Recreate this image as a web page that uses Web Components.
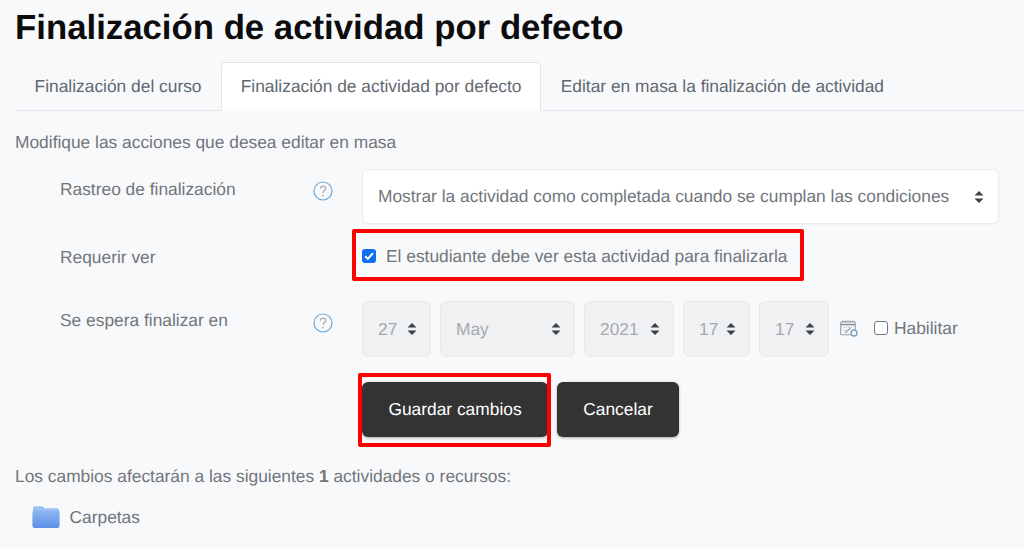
<!DOCTYPE html>
<html lang="es">
<head>
<meta charset="utf-8">
<title>Finalización de actividad por defecto</title>
<style>
    html, body { margin: 0; background: #f8f9fb; }
    body { font-family: "Liberation Sans", Arial, sans-serif; font-size: 17.36px; color: #70767c; height: 548px; overflow: hidden; text-rendering: geometricPrecision; }
</style>
</head>
<body>
<completion-page>
    <page-tabs slot="tabs">
        <page-tab>Finalización del curso</page-tab>
        <page-tab active>Finalización de actividad por defecto</page-tab>
        <page-tab>Editar en masa la finalización de actividad</page-tab>
    </page-tabs>

    <form-row slot="form" label="Rastreo de finalización" help style="--row-height:55px; --label-top:9px">
        <fake-select wide>Mostrar la actividad como completada cuando se cumplan las condiciones</fake-select>
    </form-row>
    <form-row slot="form" label="Requerir ver" style="--row-top:9px; --row-height:46px; --label-top:13px">
        <red-frame style="--out-t:-4px; --out-r:-17px; --out-b:-2px; --out-l:-10px">
            <check-box checked>El estudiante debe ver esta actividad para finalizarla</check-box>
        </red-frame>
    </form-row>
    <form-row slot="form" label="Se espera finalizar en" help style="--row-top:22px; --row-height:56px; --label-top:8px">
        <fake-select disabled style="width:69px">27</fake-select>
        <fake-select disabled style="width:135px">May</fake-select>
        <fake-select disabled style="width:90px">2021</fake-select>
        <fake-select disabled style="width:67px">17</fake-select>
        <fake-select disabled style="width:70px">17</fake-select>
        <calendar-icon></calendar-icon>
        <check-box small>Habilitar</check-box>
    </form-row>
    <form-row slot="form" style="--row-top:25px; --row-height:55px">
        <red-frame style="--out-t:-9px; --out-r:-3px; --out-b:-10px; --out-l:-4px">
            <dark-button style="width:186px">Guardar cambios</dark-button>
        </red-frame>
        <dark-button style="width:122px">Cancelar</dark-button>
    </form-row>

    <span slot="affected">Los cambios afectarán a las siguientes <b>1</b> actividades o recursos:</span>
    <folder-item slot="folder">Carpetas</folder-item>
</completion-page>

<script>
class CompletionPage extends HTMLElement {
    constructor() {
        super();
        this.attachShadow({mode: 'open'}).innerHTML = `
            <style>
                :host { display: block; padding: 0 15px; }
                h1 { margin: 0; padding-top: 9px; height: 62px; box-sizing: border-box; font-size: 34.78px; line-height: 38px; font-weight: 700; color: #0c0c0c; }
                .intro { margin-top: 20px; line-height: 22px; }
                .form { margin-top: 16px; }
                .affected { margin-top: 28px; line-height: 22px; }
                .folder { margin-top: 18px; padding-left: 17px; }
            </style>
            <h1>Finalización de actividad por defecto</h1>
            <slot name="tabs"></slot>
            <div class="intro">Modifique las acciones que desea editar en masa</div>
            <div class="form"><slot name="form"></slot></div>
            <div class="affected"><slot name="affected"></slot></div>
            <div class="folder"><slot name="folder"></slot></div>
        `;
    }
}

class PageTabs extends HTMLElement {
    constructor() {
        super();
        this.attachShadow({mode: 'open'}).innerHTML = `
            <style>
                :host { display: flex; height: 49px; box-sizing: border-box; margin-right: -15px; border-bottom: 1px solid #e2e5e9; }
            </style>
            <slot></slot>
        `;
    }
}

class PageTab extends HTMLElement {
    constructor() {
        super();
        this.attachShadow({mode: 'open'}).innerHTML = `
            <style>
                :host { display: block; height: 48px; margin-bottom: -1px; box-sizing: content-box; padding: 0 18.6px; line-height: 47px; color: #5f6870; border: 1px solid transparent; border-bottom: 0; border-radius: 4px 4px 0 0; white-space: nowrap; }
                :host([active]) { background: #fff; border-color: #e2e5e9; }
            </style>
            <slot></slot>
        `;
    }
}

class FormRow extends HTMLElement {
    constructor() {
        super();
        const label = this.getAttribute('label') || '';
        const help = this.hasAttribute('help') ? `
            <svg class="help" width="20" height="20" viewBox="0 0 20 20" fill="none" aria-hidden="true">
                <circle cx="10" cy="10" r="9" stroke="#6fa8d8" stroke-width="1.2"/>
                <path d="M7.4 7.7c0-1.5 1.1-2.5 2.7-2.5s2.6.9 2.6 2.2c0 1.1-.6 1.6-1.4 2.2-.8.6-1.2 1-1.2 2v.4" stroke="#a2a8ad" stroke-width="1.2"/>
                <circle cx="10.1" cy="14.6" r=".9" fill="#a2a8ad"/>
            </svg>` : '';
        this.attachShadow({mode: 'open'}).innerHTML = `
            <style>
                :host { display: grid; grid-template-columns: 253px 20px 1fr; column-gap: 0; margin-top: var(--row-top, 0); padding-left: 45px; }
                .label { padding-top: var(--label-top, 0); line-height: 22px; }
                .help-cell { padding-top: 12px; }
                .help { display: block; }
                .controls { display: flex; align-items: center; gap: 9px; height: var(--row-height, 55px); margin-left: 29px; margin-right: 10px; }
            </style>
            <div class="label">${label}</div>
            <div class="help-cell">${help}</div>
            <div class="controls"><slot></slot></div>
        `;
    }
}

class FakeSelect extends HTMLElement {
    constructor() {
        super();
        this.attachShadow({mode: 'open'}).innerHTML = `
            <style>
                :host { display: flex; align-items: center; justify-content: space-between; box-sizing: border-box; height: 100%; padding: 0 14px 0 15px; background: #fff; border: 1px solid #e9ecef; border-radius: 6px; white-space: nowrap; box-shadow: 0 1px 2px rgba(0,0,0,.04); }
                :host([wide]) { flex: 1; height: 55px; }
                :host([disabled]) { background: #f0f1f3; color: #a5a9ad; border-color: #e7e9ec; box-shadow: none; padding-right: 13px; }
                svg { display: block; flex: none; }
            </style>
            <slot></slot>
            <svg width="10" height="14" viewBox="0 0 10 14" aria-hidden="true"><path d="M5 1 9.5 5.6H.5zM5 13 .5 8.4h9z" fill="#3c4247"/></svg>
        `;
    }
}

class CheckBox extends HTMLElement {
    constructor() {
        super();
        const checked = this.hasAttribute('checked');
        this.attachShadow({mode: 'open'}).innerHTML = `
            <style>
                :host { display: inline-flex; align-items: center; gap: 10px; white-space: nowrap; }
                :host([small]) { gap: 6px; margin-left: 7px; margin-bottom: 2px; }
                .box { box-sizing: border-box; width: 14px; height: 14px; border-radius: 3px; border: 1.5px solid #767676; background: #fff; flex: none; }
                .box.on { background: #0f6ff0; border: 0; }
                .box svg { display: block; }
            </style>
            <span class="box ${checked ? 'on' : ''}">${checked ? '<svg width="14" height="14" viewBox="0 0 14 14" fill="none"><path d="M3.2 7.2 5.9 9.9 10.9 4.2" stroke="#fff" stroke-width="2"/></svg>' : ''}</span>
            <span><slot></slot></span>
        `;
    }
}

// draws the red annotation around whatever it wraps
class RedFrame extends HTMLElement {
    constructor() {
        super();
        this.attachShadow({mode: 'open'}).innerHTML = `
            <style>
                :host { display: flex; align-items: center; position: relative; height: 100%; }
                .frame { position: absolute; top: var(--out-t); right: var(--out-r); bottom: var(--out-b); left: var(--out-l); border: 4px solid #fe0000; border-radius: 2px; pointer-events: none; }
            </style>
            <slot></slot>
            <div class="frame"></div>
        `;
    }
}

class DarkButton extends HTMLElement {
    constructor() {
        super();
        this.attachShadow({mode: 'open'}).innerHTML = `
            <style>
                :host { display: flex; align-items: center; justify-content: center; box-sizing: border-box; height: 55px; background: #333; color: #fff; border-radius: 6px; box-shadow: 0 1px 3px rgba(0,0,0,.3); white-space: nowrap; }
            </style>
            <slot></slot>
        `;
    }
}

class CalendarIcon extends HTMLElement {
    constructor() {
        super();
        this.attachShadow({mode: 'open'}).innerHTML = `
            <style>
                :host { display: block; width: 18px; height: 17px; margin-left: 2px; margin-bottom: 2px; flex: none; }
                svg { display: block; }
            </style>
            <svg width="18" height="17" viewBox="0 0 18 17" fill="none" aria-hidden="true">
                <rect x=".7" y="1.7" width="14.6" height="13" rx="1" stroke="#9aa0a5" stroke-width="1.1" fill="#f8f9fb"/>
                <path d="M1 4.6h14" stroke="#8d9499" stroke-width="1.6"/>
                <path d="M3 .6v2M5.5.6v2M8 .6v2M10.5.6v2M13 .6v2" stroke="#8d9499" stroke-width="1"/>
                <path d="M3 7.5h10M3 10h4" stroke="#c4c8cb" stroke-width="1" stroke-dasharray="1.5 1"/>
                <path d="M5 13 10.5 8" stroke="#9aa0a5" stroke-width="1.2"/>
                <circle cx="14" cy="13" r="3" fill="#f8f9fb" stroke="#7d9fb8" stroke-width="1.3"/>
            </svg>
        `;
    }
}

class FolderItem extends HTMLElement {
    constructor() {
        super();
        this.attachShadow({mode: 'open'}).innerHTML = `
            <style>
                :host { display: flex; align-items: center; gap: 9.5px; height: 24px; }
                svg { display: block; flex: none; }
            </style>
            <svg width="28" height="24" viewBox="0 0 28 24" aria-hidden="true">
                <defs><linearGradient id="f" x1="0" y1="0" x2="0" y2="1"><stop offset="0" stop-color="#8fb7f3"/><stop offset="1" stop-color="#5d8fe6"/></linearGradient></defs>
                <path d="M1 3.2C1 2 1.8 1.2 3 1.2h6.6c1 0 1.5.4 2 1.1l.7 1h12.4c1.5 0 2.3.8 2.3 2.2V7H1z" fill="#9cc0f2"/>
                <rect x=".4" y="5.4" width="27.2" height="17.6" rx="2.2" fill="url(#f)"/>
            </svg>
            <slot></slot>
        `;
    }
}

customElements.define('completion-page', CompletionPage);
customElements.define('page-tabs', PageTabs);
customElements.define('page-tab', PageTab);
customElements.define('form-row', FormRow);
customElements.define('fake-select', FakeSelect);
customElements.define('check-box', CheckBox);
customElements.define('red-frame', RedFrame);
customElements.define('dark-button', DarkButton);
customElements.define('calendar-icon', CalendarIcon);
customElements.define('folder-item', FolderItem);
</script>
</body>
</html>
